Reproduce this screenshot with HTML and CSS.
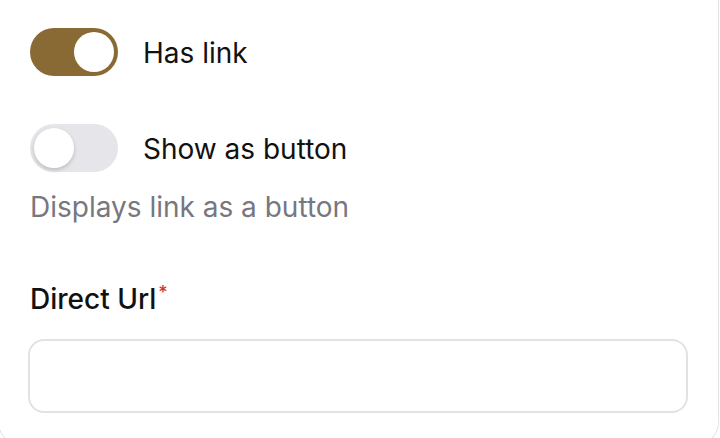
FILE: index.html
```html
<!DOCTYPE html>
<html>
<head>
	<title>Link settings</title>
	<link rel="stylesheet" href="styles.css">
</head>
<body>
	<div class="card">
		<!-- toggles -->
		<div class="toggle-row">
			<span class="switch switch-on"><span class="knob"></span></span>
			<span class="toggle-label">Has link</span>
		</div>

		<div class="toggle-row second">
			<span class="switch"><span class="knob"></span></span>
			<span class="toggle-label">Show as button</span>
		</div>
		<p class="hint">Displays link as a button</p>

		<!-- url field -->
		<label class="field-label" for="direct-url">Direct Url<span class="req">*</span></label>
		<input type="text" id="direct-url" class="text-input">
	</div>
</body>
</html>
```

FILE: styles.css
```css
/* page */
body {
  margin: 0;
  background-color: #fff;
  font-family: Inter, "Liberation Sans", sans-serif;
  color: #111;
  overflow: hidden;
}

/* card */
.card {
  margin-left: -2px;
  width: 721px;
  height: 446px;
  box-sizing: border-box;
  border: 1px solid #e4e4e4;
  border-top: none;
  border-radius: 0 0 24px 24px;
  padding: 28px 31px 0 31px;
}

/* toggles */
.toggle-row {
  display: flex;
  align-items: center;
  gap: 25px;
  height: 48px;
}

.toggle-row.second {
  margin-top: 48px;
}

.switch {
  display: flex;
  align-items: center;
  width: 88px;
  height: 48px;
  padding: 4px;
  box-sizing: border-box;
  border-radius: 24px;
  background-color: #e5e5ea;
}

.switch-on {
  background-color: #8a6a34;
  justify-content: flex-end;
}

.knob {
  width: 40px;
  height: 40px;
  border-radius: 50%;
  background-color: #fff;
  box-shadow: 0 2px 4px rgba(0, 0, 0, 0.18);
}

.switch-on .knob {
  box-shadow: none;
}

.toggle-label {
  font-size: 28px;
  line-height: 34px;
  padding-top: 1px;
}

.hint {
  margin: 18px 0 0 0;
  font-size: 28px;
  line-height: 34px;
  color: #77777f;
}

/* url field */
.field-label {
  display: block;
  margin-top: 58px;
  font-size: 28px;
  line-height: 34px;
  font-weight: 500;
}

.req {
  color: #d9342b;
  font-size: 18px;
  vertical-align: top;
  margin-left: 2px;
  position: relative;
  top: -6px;
}

.text-input {
  display: block;
  margin-top: 23px;
  margin-left: -2px;
  width: 660px;
  height: 74px;
  box-sizing: border-box;
  border: 2px solid #e2e2e2;
  border-radius: 16px;
  background-color: #fff;
  font-size: 26px;
  padding: 0 20px;
  outline: none;
}
```
